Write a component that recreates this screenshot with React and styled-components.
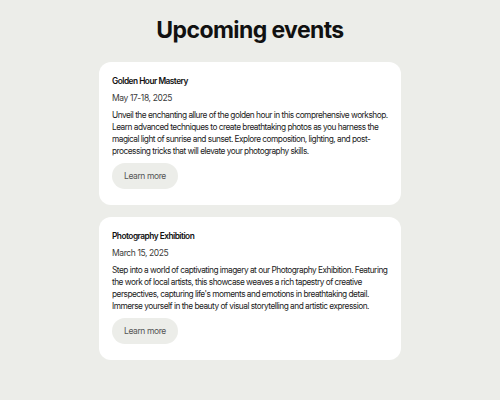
import React from "react";
import styled, { createGlobalStyle } from "styled-components";

const GlobalStyle = createGlobalStyle`
  body {
    margin: 0;
    background: #ecede9;
    font-family: Inter, "Noto Sans", sans-serif;
    color: #1a1a1a;
  }
`;

const Page = styled.div`
  display: flex;
  flex-direction: column;
  align-items: center;
  padding-top: 14px;
`;

const Heading = styled.h1`
  margin: 0 0 16px;
  font-size: 23px;
  font-weight: 700;
  letter-spacing: -0.6px;
  line-height: 32px;
  color: #111;
`;

const List = styled.div`
  width: 302px;
  display: flex;
  flex-direction: column;
  gap: 12px;
`;

const Card = styled.div`
  background: #fff;
  border-radius: 12px;
  padding: 13px 13px 16px;
  display: flex;
  flex-direction: column;
  align-items: flex-start;
`;

const Title = styled.h2`
  margin: 0;
  font-size: 8.3px;
  font-weight: 600;
  line-height: 12px;
  letter-spacing: -0.5px;
  color: #111;
`;

const Date = styled.div`
  margin-top: 5px;
  font-size: 8.5px;
  line-height: 12px;
  letter-spacing: -0.4px;
  color: #3a3a3a;
`;

const Text = styled.p`
  margin: 5px 0 0;
  font-size: 8.3px;
  line-height: 12px;
  letter-spacing: -0.5px;
  color: #222;
`;

const Button = styled.button`
  margin-top: 6px;
  height: 26px;
  padding: 0 12px;
  border: none;
  border-radius: 13px;
  background: #ecede9;
  font-family: inherit;
  font-size: 8.5px;
  letter-spacing: -0.4px;
  color: #555;
  cursor: pointer;
`;

const events = [
  {
    title: "Golden Hour Mastery",
    date: "May 17-18, 2025",
    text: "Unveil the enchanting allure of the golden hour in this comprehensive workshop. Learn advanced techniques to create breathtaking photos as you harness the magical light of sunrise and sunset. Explore composition, lighting, and post-processing tricks that will elevate your photography skills.",
  },
  {
    title: "Photography Exhibition",
    date: "March 15, 2025",
    text: "Step into a world of captivating imagery at our Photography Exhibition. Featuring the work of local artists, this showcase weaves a rich tapestry of creative perspectives, capturing life's moments and emotions in breathtaking detail. Immerse yourself in the beauty of visual storytelling and artistic expression.",
  },
];

const App = () => {
  return (
    <>
      <GlobalStyle />
      <Page>
        <Heading>Upcoming events</Heading>
        <List>
          {events.map((e) => (
            <Card key={e.title}>
              <Title>{e.title}</Title>
              <Date>{e.date}</Date>
              <Text>{e.text}</Text>
              <Button>Learn more</Button>
            </Card>
          ))}
        </List>
      </Page>
    </>
  );
};

export default App;
